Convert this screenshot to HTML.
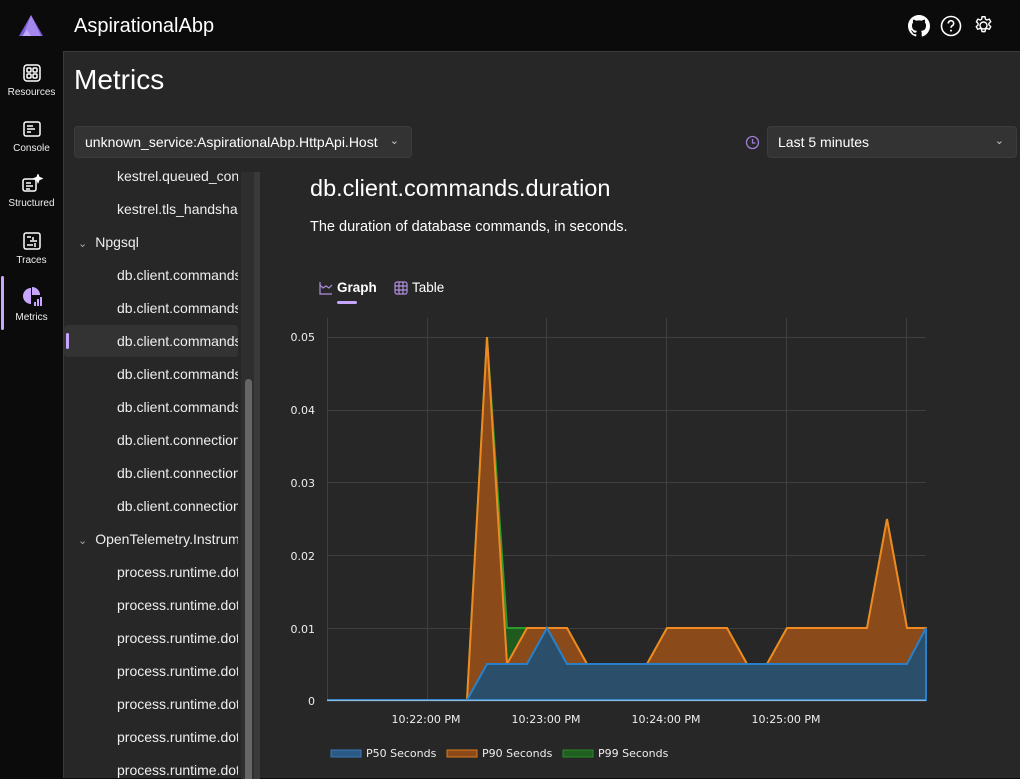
<!DOCTYPE html>
<html><head><meta charset="utf-8"><style>
*{box-sizing:border-box;margin:0;padding:0}
body{width:1020px;height:778px;overflow:hidden;background:#0b0b0b;font-family:"Liberation Sans",sans-serif;color:#fff;position:relative}
.ni{position:absolute;left:0;width:63px;text-align:center;font-size:10px;color:#eee}
.ni svg{display:block;margin:0 auto 4px}
.main{position:absolute;left:63px;top:51px;width:957px;height:727px;background:#272727;border-top:1px solid #3a3a3a;border-left:1px solid #3a3a3a}
.sel{position:absolute;height:32px;background:#333;border:1px solid #3c3c3c;border-radius:4px;font-size:14px;line-height:30px;padding-left:10px}
.ti{position:absolute;height:32px;line-height:32px;white-space:nowrap;overflow:hidden;width:121px;font-size:14px;color:#eee}
.tg{width:160px}
</style></head><body>
<svg style="position:absolute;left:18px;top:14px" width="26" height="24" viewBox="0 0 26 24"><path d="M13 1L1 22h24z" fill="#7c5bd6"/><path d="M13 1L5 22h18z" fill="#a488ee"/><path d="M4 22l5-6 4 6z" fill="#c9b8ff" opacity=".7"/></svg>
<div style="position:absolute;left:74px;top:15px;font-size:20px">AspirationalAbp</div>
<svg style="position:absolute;left:908px;top:15px" width="22" height="22" viewBox="0 0 16 16"><path fill="#fff" d="M8 0C3.58 0 0 3.58 0 8c0 3.540 2.29 6.53 5.47 7.59.4.07.55-.17.55-.38v-1.33c-2.23.48-2.7-1.070-2.7-1.07-.36-.92-.89-1.17-.89-1.17-.73-.5.05-.49.05-.49.8.06 1.23.83 1.23.83.72 1.22 1.87.87 2.33.66.07-.52.28-.87.5-1.07-1.78-.2-3.64-.89-3.64-3.950 0-.87.31-1.59.82-2.15-.08-.2-.36-1.02.08-2.12 0 0 .67-.21 2.2.82a7.6 7.6 0 014 0c1.53-1.04 2.2-.82 2.2-.82.44 1.1.16 1.92.08 2.12.51.56.82 1.27.82 2.15 0 3.07-1.87 3.75-3.65 3.95.29.25.54.73.54 1.48v2.2c0 .21.15.46.55.38A8 8 0 0016 8c0-4.42-3.58-8-8-8z"/></svg>
<svg style="position:absolute;left:940px;top:15px" width="22" height="22" viewBox="0 0 22 22"><circle cx="11" cy="11" r="9.5" fill="none" stroke="#fff" stroke-width="1.6"/><path d="M8.3 8.5a2.7 2.7 0 115 1.3c-.8.9-2.3 1.3-2.3 3" fill="none" stroke="#fff" stroke-width="1.6"/><circle cx="11" cy="15.6" r="1" fill="#fff"/></svg>
<svg style="position:absolute;left:973px;top:15px" width="21" height="21" viewBox="0 0 24 24"><path d="M12 8a4 4 0 100 8 4 4 0 000-8z" fill="none" stroke="#fff" stroke-width="1.6"/><path d="M10.3 2h3.4l.6 2.8 1.6.9 2.7-1 1.7 3-2.1 1.9v1.8l2.1 1.9-1.7 3-2.7-1-1.6.9-.6 2.8h-3.4l-.6-2.8-1.6-.9-2.7 1-1.7-3 2.1-1.9v-1.8L3.9 7.7l1.7-3 2.7 1 1.6-.9z" fill="none" stroke="#fff" stroke-width="1.6" stroke-linejoin="round"/></svg>

<div class="ni" style="top:63px"><svg width="20" height="20" viewBox="0 0 20 20" fill="none" stroke="#fff" stroke-width="1.5"><rect x="2" y="2" width="16" height="16" rx="3"/><rect x="5" y="5" width="4" height="4" rx="1"/><rect x="11" y="5" width="4" height="4" rx="1"/><rect x="5" y="11" width="4" height="4" rx="1"/><rect x="11" y="11" width="4" height="4" rx="1"/></svg>Resources</div>
<div class="ni" style="top:119px"><svg width="20" height="20" viewBox="0 0 20 20" fill="none" stroke="#fff" stroke-width="1.5"><rect x="2" y="3" width="16" height="14" rx="2"/><path d="M5 7h6M5 10h8M5 13h4"/></svg>Console</div>
<div class="ni" style="top:174px"><svg width="22" height="20" viewBox="0 0 22 20" fill="none" stroke="#fff" stroke-width="1.5"><rect x="2" y="5" width="13" height="12" rx="2"/><path d="M5 9h5M5 12h7M5 15h4"/><path d="M17 1l1 2.5 2.5 1-2.5 1-1 2.5-1-2.5-2.5-1 2.5-1z" fill="#fff"/></svg>Structured</div>
<div class="ni" style="top:231px"><svg width="20" height="20" viewBox="0 0 20 20" fill="none" stroke="#fff" stroke-width="1.5"><rect x="2" y="2" width="16" height="16" rx="2"/><path d="M5 6h4M11 6v3M8 10h7M5 14h6M13 12v4"/></svg>Traces</div>
<div style="position:absolute;left:1px;top:276px;width:3px;height:54px;background:#c8a6ff;border-radius:2px"></div>
<div class="ni" style="top:286px"><svg width="22" height="22" viewBox="0 0 22 22"><path d="M10 2a8 8 0 100 16V10z" fill="#c8a6ff"/><path d="M11 1a8 8 0 018 8h-8z" fill="#c8a6ff"/><path d="M14 20v-4M17 20v-7M20 20v-9" stroke="#c8a6ff" stroke-width="2"/></svg>Metrics</div>

<div class="main">
<div style="position:absolute;left:10px;top:12px;font-size:28px">Metrics</div>
<div class="sel" style="left:10px;top:74px;width:338px">unknown_service:AspirationalAbp.HttpApi.Host<span style="position:absolute;right:12px;top:-1px;font-size:11px;color:#ccc">&#8964;</span></div>
<svg style="position:absolute;left:681px;top:83px" width="15" height="15" viewBox="0 0 15 15" fill="none" stroke="#a07ed8" stroke-width="1.3"><circle cx="7.5" cy="7.5" r="6"/><path d="M7.5 4v4h3"/></svg>
<div class="sel" style="left:703px;top:74px;width:250px">Last 5 minutes<span style="position:absolute;right:12px;top:-1px;font-size:11px;color:#ccc">&#8964;</span></div>

<div style="position:absolute;left:0;top:116px;width:176px;height:610px;overflow:hidden">
<div style="position:relative;top:1px">
<div class="ti" style="left:53px;top:-9px">kestrel.queued_connections</div>
<div class="ti" style="left:53px;top:24px">kestrel.tls_handshakes</div>
<div class="ti tg" style="left:14px;top:57px"><span style="color:#aaa;font-size:11px;margin-right:8px">&#8964;</span>Npgsql</div>
<div class="ti" style="left:53px;top:90px">db.client.commands</div>
<div class="ti" style="left:53px;top:123px">db.client.commands</div>
<div style="position:absolute;left:0;top:156px;width:174px;height:32px;background:#333;border-radius:4px"></div>
<div style="position:absolute;left:2px;top:164px;width:3px;height:16px;background:#c8a6ff;border-radius:2px"></div>
<div class="ti" style="left:53px;top:156px">db.client.commands</div>
<div class="ti" style="left:53px;top:189px">db.client.commands</div>
<div class="ti" style="left:53px;top:222px">db.client.commands</div>
<div class="ti" style="left:53px;top:255px">db.client.connections</div>
<div class="ti" style="left:53px;top:288px">db.client.connections</div>
<div class="ti" style="left:53px;top:321px">db.client.connections</div>
<div class="ti tg" style="left:14px;top:354px"><span style="color:#aaa;font-size:11px;margin-right:8px">&#8964;</span>OpenTelemetry.Instrumentation</div>
<div class="ti" style="left:53px;top:387px">process.runtime.dotnet</div>
<div class="ti" style="left:53px;top:420px">process.runtime.dotnet</div>
<div class="ti" style="left:53px;top:453px">process.runtime.dotnet</div>
<div class="ti" style="left:53px;top:486px">process.runtime.dotnet</div>
<div class="ti" style="left:53px;top:519px">process.runtime.dotnet</div>
<div class="ti" style="left:53px;top:552px">process.runtime.dotnet</div>
<div class="ti" style="left:53px;top:585px">process.runtime.dotnet</div>
</div></div>
<div style="position:absolute;left:177px;top:120px;width:13px;height:607px;background:#2e2e2e"></div>
<div style="position:absolute;left:181px;top:327px;width:7px;height:400px;background:#666;border-radius:4px 4px 0 0"></div>
<div style="position:absolute;left:190px;top:120px;width:6px;height:607px;background:#3a3a3a"></div>

<div style="position:absolute;left:246px;top:123px;font-size:23.5px">db.client.commands.duration</div>
<div style="position:absolute;left:246px;top:167px;font-size:14.5px">The duration of database commands, in seconds.</div>
<svg style="position:absolute;left:255px;top:229px" width="14" height="14" viewBox="0 0 14 14" fill="none" stroke="#b090e0" stroke-width="1.2"><path d="M1 1v12h12M1 4l3 3 3-2 3 2 3-3"/></svg>
<div style="position:absolute;left:273px;top:228px;font-size:13.5px;font-weight:bold">Graph</div>
<div style="position:absolute;left:273px;top:249px;width:20px;height:3px;border-radius:2px;background:#c8a6ff"></div>
<svg style="position:absolute;left:330px;top:229px" width="14" height="14" viewBox="0 0 14 14" fill="none" stroke="#b090e0" stroke-width="1.2"><rect x="1" y="1" width="12" height="12" rx="2"/><path d="M5 1v12M9 1v12M1 5h12M1 9h12"/></svg>
<div style="position:absolute;left:348px;top:228px;font-size:13.5px">Table</div>
</div>

<svg style="position:absolute;left:0;top:0" width="1020" height="778">
<g stroke="#3f3f3f" stroke-width="1">
<path d="M327.5 318v382M427.5 318v382M546.5 318v382M666.5 318v382M786.5 318v382M906.5 318v382"/>
<path d="M327 337.5h599M327 410.5h599M327 482.5h599M327 555.5h599M327 628.5h599"/>
</g>
<g font-family="DejaVu Sans,sans-serif" font-size="11" fill="#eee">
<text x="315" y="341" text-anchor="end">0.05</text><text x="315" y="414" text-anchor="end">0.04</text><text x="315" y="487" text-anchor="end">0.03</text><text x="315" y="560" text-anchor="end">0.02</text><text x="315" y="633" text-anchor="end">0.01</text><text x="315" y="705" text-anchor="end">0</text>
<text x="426" y="723" text-anchor="middle">10:22:00 PM</text><text x="546" y="723" text-anchor="middle">10:23:00 PM</text><text x="666" y="723" text-anchor="middle">10:24:00 PM</text><text x="786" y="723" text-anchor="middle">10:25:00 PM</text>
<text x="366" y="757">P50 Seconds</text><text x="482" y="757">P90 Seconds</text><text x="598" y="757">P99 Seconds</text>
</g>
<rect x="331" y="750" width="30" height="7" fill="#2b5a85" stroke="#3a7ab8"/>
<rect x="447" y="750" width="30" height="7" fill="#8a4a1a" stroke="#e07b1c"/>
<rect x="563" y="750" width="30" height="7" fill="#1f5f1f" stroke="#2a8a2a"/>
<path d="M467 700L487 337L507 628L527 628L567 628L587 664L647 664L667 628L727 628L747 664L767 664L787 628L867 628L887 519L907 628L926 628V700z" fill="#1f5a1f" stroke="#2a9a2a" stroke-width="2"/>
<path d="M467 700L487 337L507 664L527 628L567 628L587 664L647 664L667 628L727 628L747 664L767 664L787 628L867 628L887 519L907 628L926 628V700z" fill="#8a4a1a" stroke="#f08a20" stroke-width="2"/>
<path d="M327 700H467L487 664L527 664L547 628L567 664L907 664L926 628V700z" fill="#2b4f6b" stroke="#2a80c8" stroke-width="2"/>
<path d="M327 700.5H926" stroke="#8cb8dd" stroke-width="1.2"/>
</svg>
</body></html>
